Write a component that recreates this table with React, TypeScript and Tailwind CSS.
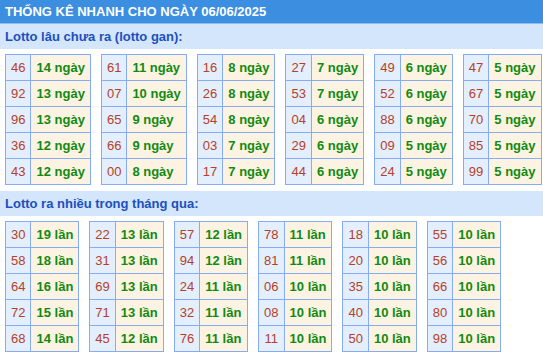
const GAN: [string, string][][] = [
  [['46', '14'], ['92', '13'], ['96', '13'], ['36', '12'], ['43', '12']],
  [['61', '11'], ['07', '10'], ['65', '9'], ['66', '9'], ['00', '8']],
  [['16', '8'], ['26', '8'], ['54', '8'], ['03', '7'], ['17', '7']],
  [['27', '7'], ['53', '7'], ['04', '6'], ['29', '6'], ['44', '6']],
  [['49', '6'], ['52', '6'], ['88', '6'], ['09', '5'], ['24', '5']],
  [['47', '5'], ['67', '5'], ['70', '5'], ['85', '5'], ['99', '5']],
];

const NHIEU: [string, string][][] = [
  [['30', '19'], ['58', '18'], ['64', '16'], ['72', '15'], ['68', '14']],
  [['22', '13'], ['31', '13'], ['69', '13'], ['71', '13'], ['45', '12']],
  [['57', '12'], ['94', '12'], ['24', '11'], ['32', '11'], ['76', '11']],
  [['78', '11'], ['81', '11'], ['06', '10'], ['08', '10'], ['11', '10']],
  [['18', '10'], ['20', '10'], ['35', '10'], ['40', '10'], ['50', '10']],
  [['55', '10'], ['56', '10'], ['66', '10'], ['80', '10'], ['98', '10']],
];

function LottoTable({ rows, unit }: { rows: [string, string][]; unit: string }) {
  return (
    <table className="shrink-0 border-collapse border border-[#86acf3] whitespace-nowrap">
      <tbody>
        {rows.map(([num, count]) => (
          <tr key={num} className="h-[26px]">
            <td className="border border-[#86acf3] bg-[#e3effc] px-[5px] py-0 text-center text-[#b5402a]">
              {num}
            </td>
            <td className="border border-[#86acf3] bg-[#fdf3e2] px-[5px] py-0 font-bold text-[#128a12]">
              {count} {unit}
            </td>
          </tr>
        ))}
      </tbody>
    </table>
  );
}

function Section({ title, tables, unit }: { title: string; tables: [string, string][][]; unit: string }) {
  return (
    <section>
      <div className="bg-[#d3e6fb] px-[5px] py-[5px] font-bold text-[#1d4fbf] leading-[15px]">{title}</div>
      <div className="flex items-start gap-[10px] px-[5px] pt-[5px] pb-[6px]">
        {tables.map((t, i) => (
          <LottoTable key={i} rows={t} unit={unit} />
        ))}
      </div>
    </section>
  );
}

export default function App() {
  return (
    <div className="w-[543px] h-[354px] overflow-hidden bg-white text-[13px] leading-[15px] font-['Liberation_Sans',Arial,sans-serif]">
      <div className="bg-[#3b8ee0] px-[5px] py-[4px] border-b border-[#8dbdf0] font-bold text-white leading-[15px]">
        THỐNG KÊ NHANH CHO NGÀY 06/06/2025
      </div>
      <Section title="Lotto lâu chưa ra (lotto gan):" tables={GAN} unit="ngày" />
      <Section title="Lotto ra nhiều trong tháng qua:" tables={NHIEU} unit="lần" />
    </div>
  );
}
